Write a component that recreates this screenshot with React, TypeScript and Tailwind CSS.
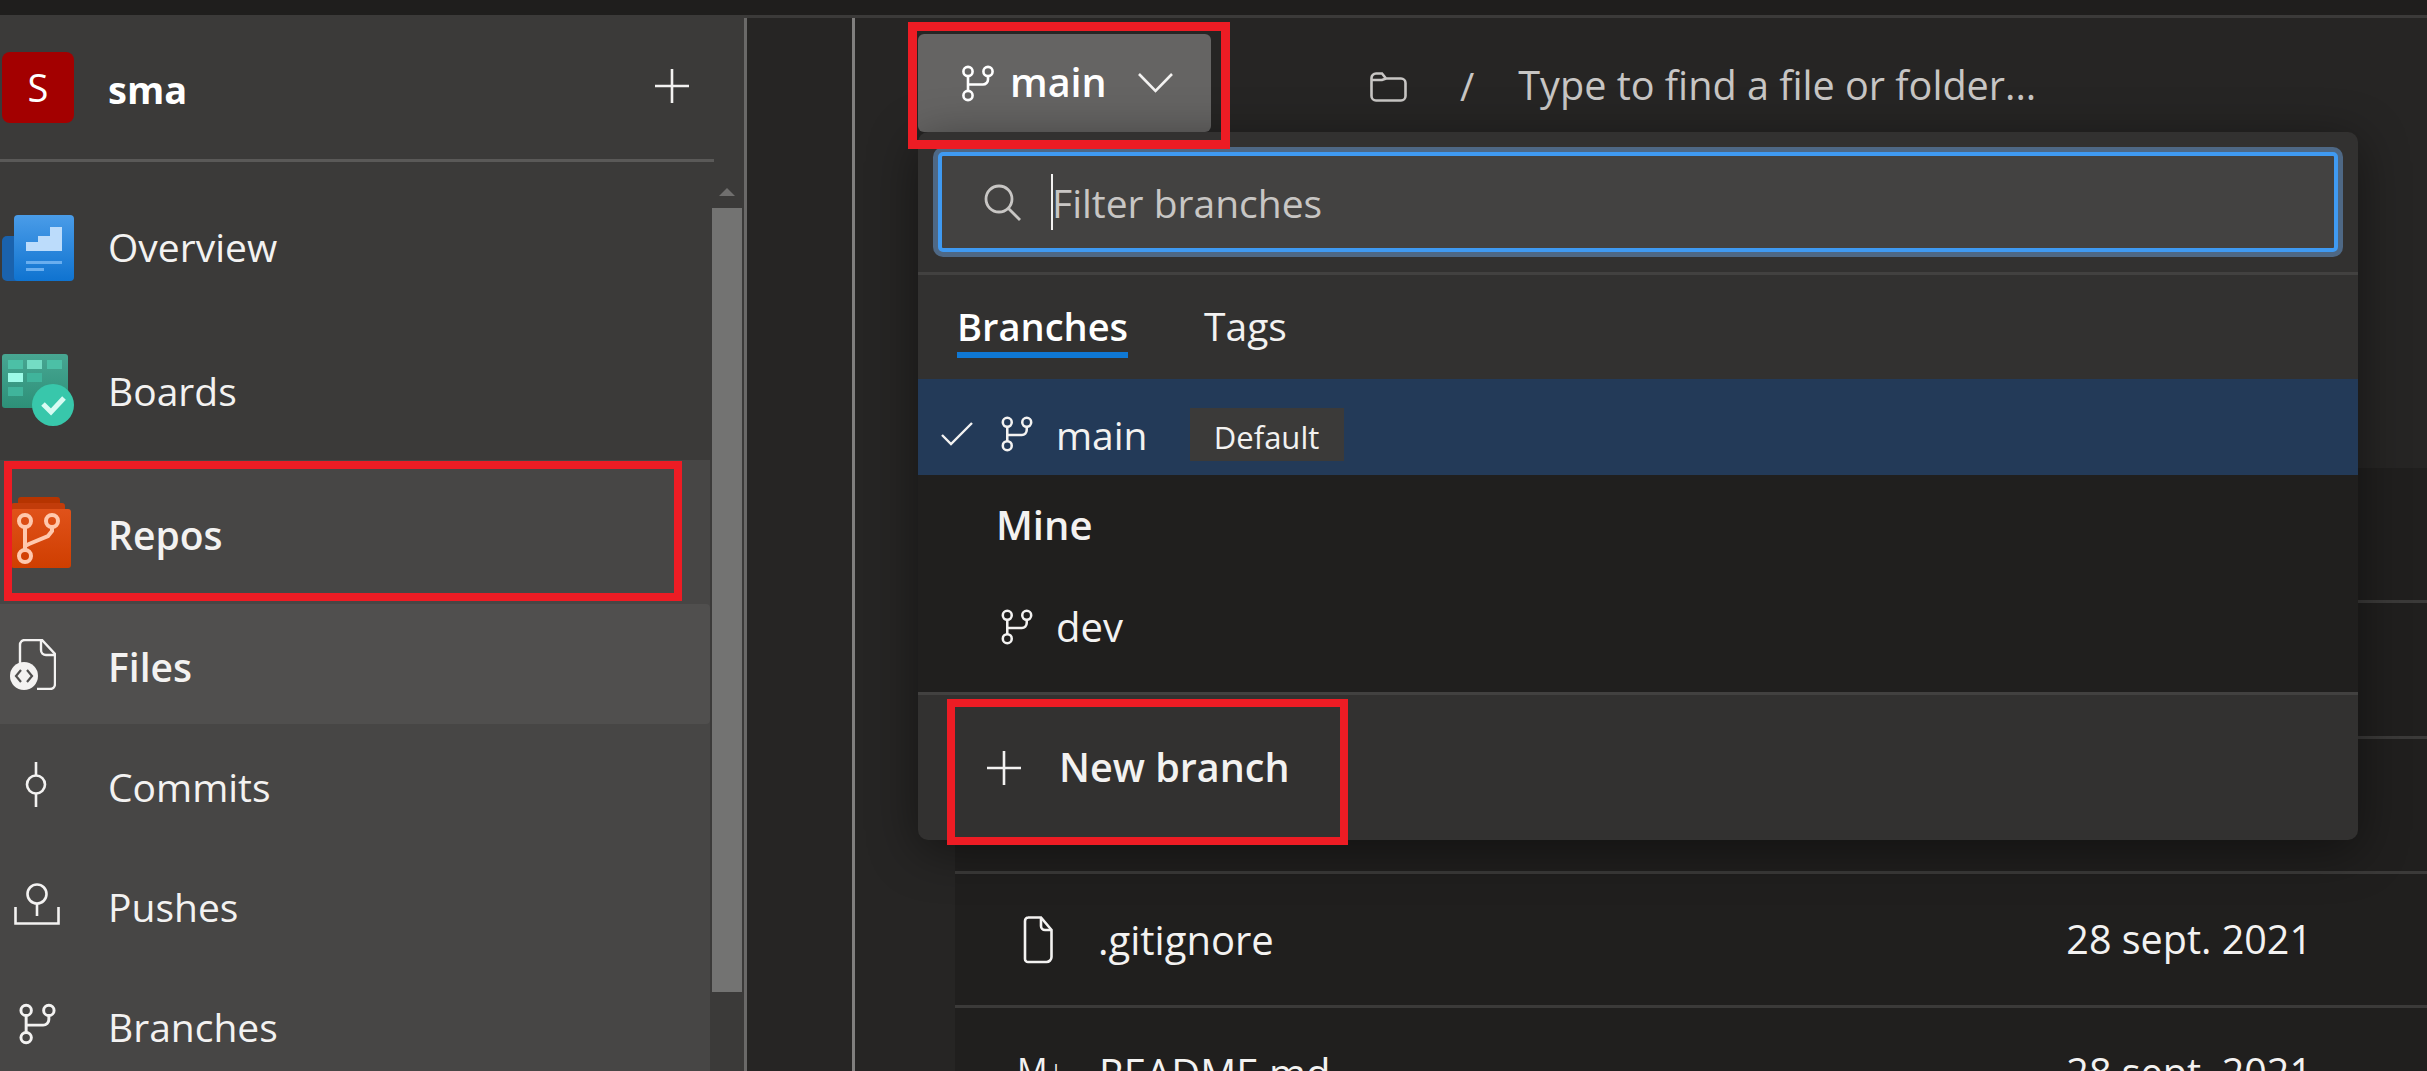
import React from 'react';

// Azure DevOps repo page with the branch picker open

function BranchIcon({ className = '' }: { className?: string }) {
  return (
    <svg viewBox="0 0 32 37" fill="none" stroke="currentColor" strokeWidth="2.6" className={className}>
      <circle cx="6" cy="6.5" r="4.6" />
      <circle cx="26" cy="6.5" r="4.6" />
      <circle cx="6" cy="30.5" r="4.6" />
      <path d="M6 11v15" />
      <path d="M26 11v3.5a5 5 0 0 1-5 5H6" />
    </svg>
  );
}

function OverviewIcon() {
  return (
    <svg viewBox="0 0 72 66" className="h-[66px] w-[72px]">
      <defs>
        <linearGradient id="ov" x1="0" y1="0" x2="0" y2="1">
          <stop offset="0" stopColor="#4a9ce8" />
          <stop offset="1" stopColor="#0f73d0" />
        </linearGradient>
      </defs>
      <rect x="0" y="21" width="30" height="45" rx="5" fill="#1a62ad" />
      <rect x="12" y="0" width="60" height="66" rx="4" fill="url(#ov)" />
      <path d="M24 36V27H36V21H48V12H60V36z" fill="#bcdcfb" />
      <rect x="24" y="46" width="36" height="3" fill="#69aeef" />
      <rect x="24" y="53" width="18" height="3" fill="#69aeef" />
    </svg>
  );
}

function BoardsIcon() {
  const cells = [
    { x: 6, y: 6, w: 15, h: 9, c: '#4cc0a6' },
    { x: 25, y: 6, w: 15, h: 9, c: '#74dcc4' },
    { x: 45, y: 6, w: 15, h: 9, c: '#4cc0a6' },
    { x: 6, y: 19, w: 15, h: 9, c: '#9dfbe8' },
    { x: 25, y: 19, w: 15, h: 9, c: '#40b49b' },
    { x: 6, y: 33, w: 15, h: 9, c: '#40b49b' },
  ];
  return (
    <svg viewBox="0 0 72 72" className="h-[72px] w-[72px]">
      <defs>
        <linearGradient id="bd" x1="0" y1="0" x2="0" y2="1">
          <stop offset="0" stopColor="#48a692" />
          <stop offset="1" stopColor="#2d9078" />
        </linearGradient>
      </defs>
      <rect x="0" y="0" width="66" height="54" rx="3" fill="url(#bd)" />
      {cells.map((r, i) => (
        <rect key={i} x={r.x} y={r.y} width={r.w} height={r.h} fill={r.c} />
      ))}
      <circle cx="51" cy="51" r="21" fill="#38c7ab" />
      <path d="M41 50l8 8 13-14" fill="none" stroke="#d8fbf3" strokeWidth="5" />
    </svg>
  );
}

function ReposIcon() {
  return (
    <svg viewBox="0 0 62 71" className="h-[71px] w-[62px]">
      <defs>
        <linearGradient id="rp" x1="0" y1="0" x2="0" y2="1">
          <stop offset="0" stopColor="#e0521a" />
          <stop offset="1" stopColor="#cf3e00" />
        </linearGradient>
      </defs>
      <rect x="7" y="0" width="42" height="20" rx="3" fill="#b63400" />
      <rect x="0" y="6" width="54" height="20" rx="3" fill="#c23c0a" />
      <rect x="0" y="12" width="60" height="59" rx="3" fill="url(#rp)" />
      <g fill="none" stroke="#ffc8ad" strokeWidth="4">
        <circle cx="14" cy="24" r="6" />
        <circle cx="41" cy="24" r="6" />
        <circle cx="14" cy="59" r="6" />
        <path d="M14 30v23M41 30v4l-4 5-19 8-4 2" />
      </g>
    </svg>
  );
}

function FilesIcon() {
  return (
    <svg viewBox="0 0 46 51" className="h-[51px] w-[46px]" fill="none">
      <path d="M10 24V6a5 5 0 0 1 5-5h17l13 14v30a5 5 0 0 1-5 5H27" stroke="#f3f2f1" strokeWidth="2.4" />
      <path d="M31 2v9a5 5 0 0 0 5 5h9" stroke="#f3f2f1" strokeWidth="2.4" />
      <circle cx="14" cy="37" r="14" fill="#f3f2f1" />
      <path d="M11 31l-5 6 5 6M17 31l5 6-5 6" stroke="#504f4e" strokeWidth="2.2" />
    </svg>
  );
}

function CommitsIcon() {
  return (
    <svg viewBox="0 0 22 45" className="h-[45px] w-[22px]" fill="none" stroke="#f3f2f1" strokeWidth="2.6">
      <circle cx="11" cy="22.5" r="9" />
      <path d="M11 0v13M11 32v13" />
    </svg>
  );
}

function PushesIcon() {
  return (
    <svg viewBox="0 0 46 42" className="h-[42px] w-[46px]" fill="none" stroke="#f3f2f1" strokeWidth="2.6">
      <circle cx="23" cy="11" r="9.500" />
      <path d="M23 21v12" />
      <path d="M1.500 24v16.500h43V24" />
    </svg>
  );
}

function NavRow({ icon, label, height, active, bold, iconBox, labelPad = 'pt-[4px]' }: {
  icon: React.ReactNode; label: string; height: string; active?: boolean; bold?: boolean; iconBox: string; labelPad?: string;
}) {
  return (
    <div className={`flex shrink-0 items-center rounded-r-[4px] ${height} ${active ? 'bg-[#504f4e]' : ''}`}>
      <div className={`flex w-[108px] shrink-0 ${iconBox}`}>{icon}</div>
      <span className={`text-[39px] leading-none text-[#f3f2f1] ${labelPad} ${bold ? 'font-semibold' : ''}`}>{label}</span>
    </div>
  );
}

function Sidebar() {
  return (
    <aside className="flex w-[747px] shrink-0 flex-col border-r-[3px] border-[#6a6968] bg-[#3b3a39]">
      <div className="mr-[30px] flex h-[144px] shrink-0 items-center border-b-[3px] border-[#5a5958] pl-[2px] pr-[25px]">
        <div className="mb-[3px] flex h-[71px] w-[72px] items-center justify-center rounded-[8px] bg-[#a30000] text-[38px] text-white">S</div>
        <span className="ml-[34px] mt-[1px] text-[38px] font-bold leading-none text-white">sma</span>
        <svg viewBox="0 0 34 34" className="mb-[6px] ml-auto h-[34px] w-[34px]" fill="none" stroke="#f3f2f1" strokeWidth="2.6">
          <path d="M17 0v34M0 17h34" />
        </svg>
      </div>

      <div className="flex min-h-0 flex-1">
        <div className="flex w-[710px] shrink-0 flex-col overflow-hidden pt-[14px]">
          <NavRow label="Overview" height="h-[143px]" iconBox="pl-[2px]" labelPad="pb-[2px]" icon={<OverviewIcon />} />
          <NavRow label="Boards" height="h-[141px]" iconBox="pl-[2px]" labelPad="pt-[2px]" icon={<BoardsIcon />} />
          <div className="flex flex-1 flex-col bg-[#474645]">
            <NavRow label="Repos" height="h-[144px]" iconBox="pl-[11px]" bold icon={<ReposIcon />} />
            <NavRow label="Files" height="h-[120px]" iconBox="pl-[10px]" bold active icon={<FilesIcon />} />
            <NavRow label="Commits" height="h-[120px]" iconBox="pl-[25px]" icon={<CommitsIcon />} />
            <NavRow label="Pushes" height="h-[120px]" iconBox="pl-[14px]" icon={<PushesIcon />} />
            <NavRow label="Branches" height="h-[120px]" iconBox="pl-[19px] text-[#f3f2f1]" icon={<BranchIcon className="h-[42px] w-[37px]" />} />
          </div>
        </div>
        <div className="ml-[2px] flex w-[30px] shrink-0 flex-col items-center pt-[26px]">
          <div className="h-0 w-0 border-x-[8px] border-b-[8px] border-x-transparent border-b-[#706f6e]" />
          <div className="mt-[12px] h-[784px] w-full bg-[#737372]" />
        </div>
      </div>
    </aside>
  );
}

function BranchMenu() {
  return (
    <div className="absolute left-[63px] top-[114px] flex w-[1440px] flex-col overflow-hidden rounded-[10px] bg-[#323130] shadow-[0_10px_50px_rgba(0,0,0,0.45)]">
      <div className="flex h-[143px] shrink-0 flex-col border-b-[3px] border-[#424140] px-[15px] pt-[15px]">
        <div className="h-[110px] rounded-[10px] bg-[#4e6885] p-[5px]">
          <div className="flex h-full items-center rounded-[5px] border-[4px] border-[#3f9af2] bg-[#434241] pl-[42px]">
            <svg viewBox="0 0 37 37" className="h-[37px] w-[37px]" fill="none" stroke="#c8c6c4" strokeWidth="2.8">
              <circle cx="15" cy="15" r="13" />
              <path d="M24.500 24.500L36 36" />
            </svg>
            <div className="ml-[30px] h-[56px] w-[2px] bg-[#f3f2f1]" />
            <span className="-ml-[1px] text-[39px] leading-none text-[#c8c6c4]">Filter branches</span>
          </div>
        </div>
      </div>

      <div className="flex h-[104px] shrink-0 items-start gap-[76px] px-[39px] pt-[29px]">
        <div className="flex flex-col items-center">
          <span className="text-[38px] font-semibold leading-[44px] text-white">Branches</span>
          <div className="mt-[4px] h-[6px] w-full bg-[#0f78d4]" />
        </div>
        <span className="text-[39px] leading-[44px] text-[#f3f2f1]">Tags</span>
      </div>

      <div className="flex h-[96px] shrink-0 items-center bg-[#233a58] pl-[23px] pt-[14px]">
        <svg viewBox="0 0 32 24" className="h-[24px] w-[32px]" fill="none" stroke="#f3f2f1" strokeWidth="2.4">
          <path d="M1 13l9 9L31 1" />
        </svg>
        <BranchIcon className="ml-[28px] h-[36px] w-[32px] text-[#f3f2f1]" />
        <span className="ml-[23px] text-[39px] leading-none text-[#f3f2f1]">main</span>
        <span className="ml-[42px] flex h-[53px] w-[154px] items-center justify-center bg-[#3b3a39] pt-[6px] text-[31px] leading-none text-[#f3f2f1]">Default</span>
      </div>

      <div className="flex h-[217px] shrink-0 flex-col bg-[#201f1e] pl-[78px]">
        <div className="flex h-[100px] items-center text-[40px] font-semibold leading-none text-[#f3f2f1]">Mine</div>
        <div className="mt-[26px] flex h-[52px] items-center text-[#f3f2f1]">
          <BranchIcon className="ml-[5px] h-[36px] w-[32px]" />
          <span className="ml-[23px] text-[40px] leading-none">dev</span>
        </div>
      </div>

      <div className="flex h-[148px] shrink-0 items-center border-t-[3px] border-[#424140] pl-[69px]">
        <svg viewBox="0 0 34 34" className="h-[34px] w-[34px]" fill="none" stroke="#f3f2f1" strokeWidth="2.6">
          <path d="M17 0v34M0 17h34" />
        </svg>
        <span className="ml-[38px] text-[39.500px] font-semibold leading-none text-[#f3f2f1]">New branch</span>
      </div>
    </div>
  );
}

const rowHeights = ['h-[135px]', 'h-[136px]', 'h-[135px]', 'h-[134px]', 'h-[135px]'];

function FileList() {
  return (
    <div className="ml-[100px] mt-[336px] flex flex-col bg-[#201f1e]">
      {rowHeights.map((h, i) => (
        <div key={i} className={`flex shrink-0 border-b-[3px] border-[#3b3a39] ${h}`}>
          {i === 3 && (
            <div className="flex flex-1 items-center pr-[115px]">
              <svg viewBox="0 0 30 48" className="ml-[68px] h-[48px] w-[30px]" fill="none" stroke="#f3f2f1" strokeWidth="2.6">
                <path d="M5 1.500h13L28.500 14v27a5 5 0 0 1-5 5h-18.500a3 3 0 0 1-3-3V5a3.500 3.500 0 0 1 3.500-3.500z" />
                <path d="M18 2v8a4 4 0 0 0 4 4h6" />
              </svg>
              <span className="ml-[45px] text-[40px] leading-none text-[#f3f2f1]">.gitignore</span>
              <span className="ml-auto text-[39.500px] leading-none text-[#f3f2f1]">28 sept. 2021</span>
            </div>
          )}
          {i === 4 && (
            <div className="flex flex-1 items-start pr-[115px] pt-[45px]">
              <span className="ml-[62px] w-[82px] text-[34px] leading-none text-[#f3f2f1]">M↓</span>
              <span className="text-[40px] leading-none text-[#f3f2f1]">README.md</span>
              <span className="ml-auto text-[39.500px] leading-none text-[#f3f2f1]">28 sept. 2021</span>
            </div>
          )}
        </div>
      ))}
    </div>
  );
}

export default function App() {
  return (
    <div className="relative flex h-[1071px] w-[2427px] flex-col overflow-hidden bg-[#262524] font-['Open_Sans',sans-serif]">
      <div className="h-[18px] shrink-0 border-b-[3px] border-[#3b3a39] bg-[#1f1e1d]" />
      <div className="flex min-h-0 flex-1">
        <Sidebar />
        <div className="w-[108px] shrink-0 border-r-[3px] border-[#807f7e] bg-[#262524]" />
        <main className="relative min-w-0 flex-1">
          <div className="flex h-[114px] items-start pl-[63px] pt-[16px]">
            <div className="flex h-[98px] w-[293px] items-center rounded-[6px] bg-[#656463] pl-[44px] text-white">
              <BranchIcon className="h-[37px] w-[32px]" />
              <span className="ml-[16px] text-[39.500px] font-semibold leading-none">main</span>
              <svg viewBox="0 0 35 20" className="ml-[31px] h-[20px] w-[35px]" fill="none" stroke="#f3f2f1" strokeWidth="2.6">
                <path d="M1 1l16.500 17L34 1" />
              </svg>
            </div>
            <svg viewBox="0 0 37 30" className="ml-[159px] mt-[38px] h-[30px] w-[37px]" fill="none" stroke="#c8c6c4" strokeWidth="2.6">
              <path d="M1.500 6a4.500 4.500 0 0 1 4.500-4.500h6l4 5h15a4.500 4.500 0 0 1 4.500 4.500v13a4.500 4.500 0 0 1-4.500 4.500H6A4.500 4.500 0 0 1 1.500 24z" />
              <path d="M1.500 8H12l4-1.500" />
            </svg>
            <span className="ml-[53px] mt-[32px] text-[39px] leading-none text-[#c8c6c4]">/</span>
            <span className="ml-[44px] mt-[32px] text-[39.600px] leading-none text-[#c8c6c4]">Type to find a file or folder...</span>
          </div>
          <FileList />
          <BranchMenu />
        </main>
      </div>

      {/* annotation boxes drawn over the screenshot */}
      <div className="absolute left-[4px] top-[461px] h-[140px] w-[678px] border-[8px] border-[#ed1c24]" />
      <div className="absolute left-[908px] top-[22px] h-[127px] w-[322px] border-[9px] border-[#ed1c24]" />
      <div className="absolute left-[947px] top-[699px] h-[146px] w-[401px] border-[8px] border-[#ed1c24]" />
    </div>
  );
}
